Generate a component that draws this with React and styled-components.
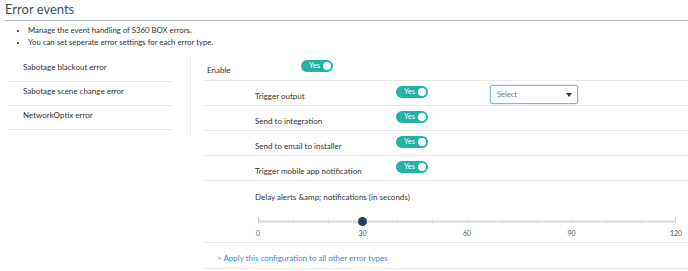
import React from "react";
import styled, { createGlobalStyle } from "styled-components";

const GlobalStyle = createGlobalStyle`
  body {
    margin: 0;
    background: #fff;
    font-family: "Lato", "Open Sans", sans-serif;
    color: #333;
  }
`;

const errorTypes = [
  "Sabotage blackout error",
  "Sabotage scene change error",
  "NetworkOptix error",
];

const actions = [
  { label: "Trigger output", select: true },
  { label: "Send to integration" },
  { label: "Send to email to installer" },
  { label: "Trigger mobile app notification" },
];

export default function App() {
  return (
    <>
      <GlobalStyle />
      <Page>
        <Title>Error events</Title>
        <Notes>
          <li>Manage the event handling of S360 BOX errors.</li>
          <li>You can set seperate error settings for each error type.</li>
        </Notes>
        <Main>
          <TypeList>
            {errorTypes.map((t) => (
              <TypeItem key={t}>{t}</TypeItem>
            ))}
          </TypeList>
          <Settings>
            <Row>
              <Label $width={94}>Enable</Label>
              <Toggle />
            </Row>
            {actions.map((a) => (
              <Row key={a.label} $indent>
                <Label $width={141}>{a.label}</Label>
                <Toggle />
                {a.select && (
                  <Select>
                    Select
                    <Caret />
                  </Select>
                )}
              </Row>
            ))}
            <DelayRow>
              <DelayLabel>Delay alerts &amp;amp; notifications (in seconds)</DelayLabel>
              <Slider>
                <Track>
                  <Knob style={{ left: `${(30 / 120) * 100}%` }} />
                </Track>
                <Scale>
                  {[0, 30, 60, 90, 120].map((v) => (
                    <Tick key={v}>{v}</Tick>
                  ))}
                </Scale>
              </Slider>
            </DelayRow>
            <LinkRow>
              <ApplyLink href="#">&gt; Apply this configuration to all other error types</ApplyLink>
            </LinkRow>
          </Settings>
        </Main>
      </Page>
    </>
  );
}

function Toggle() {
  return (
    <ToggleBody>
      <span>Yes</span>
      <ToggleKnob />
    </ToggleBody>
  );
}

const Page = styled.div`
  padding-left: 5px;
`;

const Title = styled.h2`
  margin: 0;
  padding-top: 1px;
  height: 19px;
  border-bottom: 1px solid #a7b2bd;
  color: #3c4f5d;
  font-size: 13px;
  font-weight: 400;
  line-height: 17px;
`;

const Notes = styled.ul`
  margin: 3px 0 0;
  padding-left: 23px;
  font-size: 7.8px;
  line-height: 12px;
  color: #333;
  li::marker {
    font-size: 7px;
  }
`;

const Main = styled.div`
  display: flex;
  align-items: flex-start;
  margin-top: 8px;
`;

const TypeList = styled.div`
  width: 182px;
  padding: 2px 0 6px 3px;
  border-right: 1px solid #ececec;
`;

const TypeItem = styled.div`
  width: 164px;
  height: 24px;
  padding: 4px 0 0 15px;
  box-sizing: border-box;
  border-bottom: 1px solid #e6e6e6;
  font-size: 8px;
  line-height: 10px;
`;

const Settings = styled.div`
  flex: 1;
  margin-left: 14px;
  font-size: 8px;
  line-height: 10px;
`;

const Row = styled.div`
  display: flex;
  align-items: flex-start;
  height: 25px;
  padding-left: ${(p) => (p.$indent ? 50 : 2)}px;
  padding-top: ${(p) => (p.$indent ? 5 : 4)}px;
  box-sizing: border-box;
  border-bottom: 1px solid #e6e6e6;
`;

const Label = styled.div`
  width: ${(p) => p.$width}px;
  padding-top: 5px;
`;

const ToggleBody = styled.div`
  position: relative;
  display: flex;
  align-items: center;
  width: 32px;
  height: 12px;
  padding-left: 8px;
  box-sizing: border-box;
  border-radius: 6px;
  background: #21b3a5;
  color: #fff;
  font-size: 7.5px;
  line-height: 12px;
`;

const ToggleKnob = styled.span`
  position: absolute;
  right: 2px;
  top: 2px;
  width: 8px;
  height: 8px;
  border-radius: 50%;
  background: #fff;
`;

const Select = styled.div`
  display: flex;
  align-items: center;
  justify-content: space-between;
  width: 88px;
  height: 19px;
  margin: -1px 0 0 62px;
  padding: 0 5px 0 6px;
  box-sizing: border-box;
  border: 1px solid #86b1e6;
  border-radius: 2px;
  box-shadow: 0 0 2px rgba(102, 160, 230, 0.5);
  color: #777;
  font-size: 7.5px;
`;

const Caret = styled.span`
  width: 0;
  height: 0;
  border-left: 3.5px solid transparent;
  border-right: 3.5px solid transparent;
  border-top: 4px solid #333;
`;

const DelayRow = styled.div`
  height: 62px;
  padding: 11px 0 0 50px;
  box-sizing: border-box;
  border-bottom: 1px solid #e6e6e6;
`;

const DelayLabel = styled.div``;

const Slider = styled.div`
  margin: 18px 0 0 3px;
  width: 418px;
`;

const Track = styled.div`
  position: relative;
  height: 3px;
  background:
    repeating-linear-gradient(
      to right,
      #cfd3d7 0 1px,
      transparent 1px 34.83px
    ),
    #e2e5e8;
  &::before,
  &::after {
    content: "";
    position: absolute;
    top: -3px;
    width: 1px;
    height: 4px;
    background: #c8cdd2;
  }
  &::before {
    left: 0;
  }
  &::after {
    right: 0;
  }
`;

const Knob = styled.span`
  position: absolute;
  top: -3px;
  width: 9px;
  height: 9px;
  margin-left: -4.5px;
  border-radius: 50%;
  background: #1c4462;
`;

const Scale = styled.div`
  display: flex;
  justify-content: space-between;
  margin-top: 6px;
`;

const Tick = styled.span`
  display: flex;
  justify-content: center;
  width: 0;
  color: #555;
  font-size: 7px;
  line-height: 9px;
`;

const LinkRow = styled.div`
  height: 26px;
  padding: 10px 0 0 12px;
  box-sizing: border-box;
  border-bottom: 1px solid #e6e6e6;
`;

const ApplyLink = styled.a`
  color: #3a8ad6;
  text-decoration: none;
`;
